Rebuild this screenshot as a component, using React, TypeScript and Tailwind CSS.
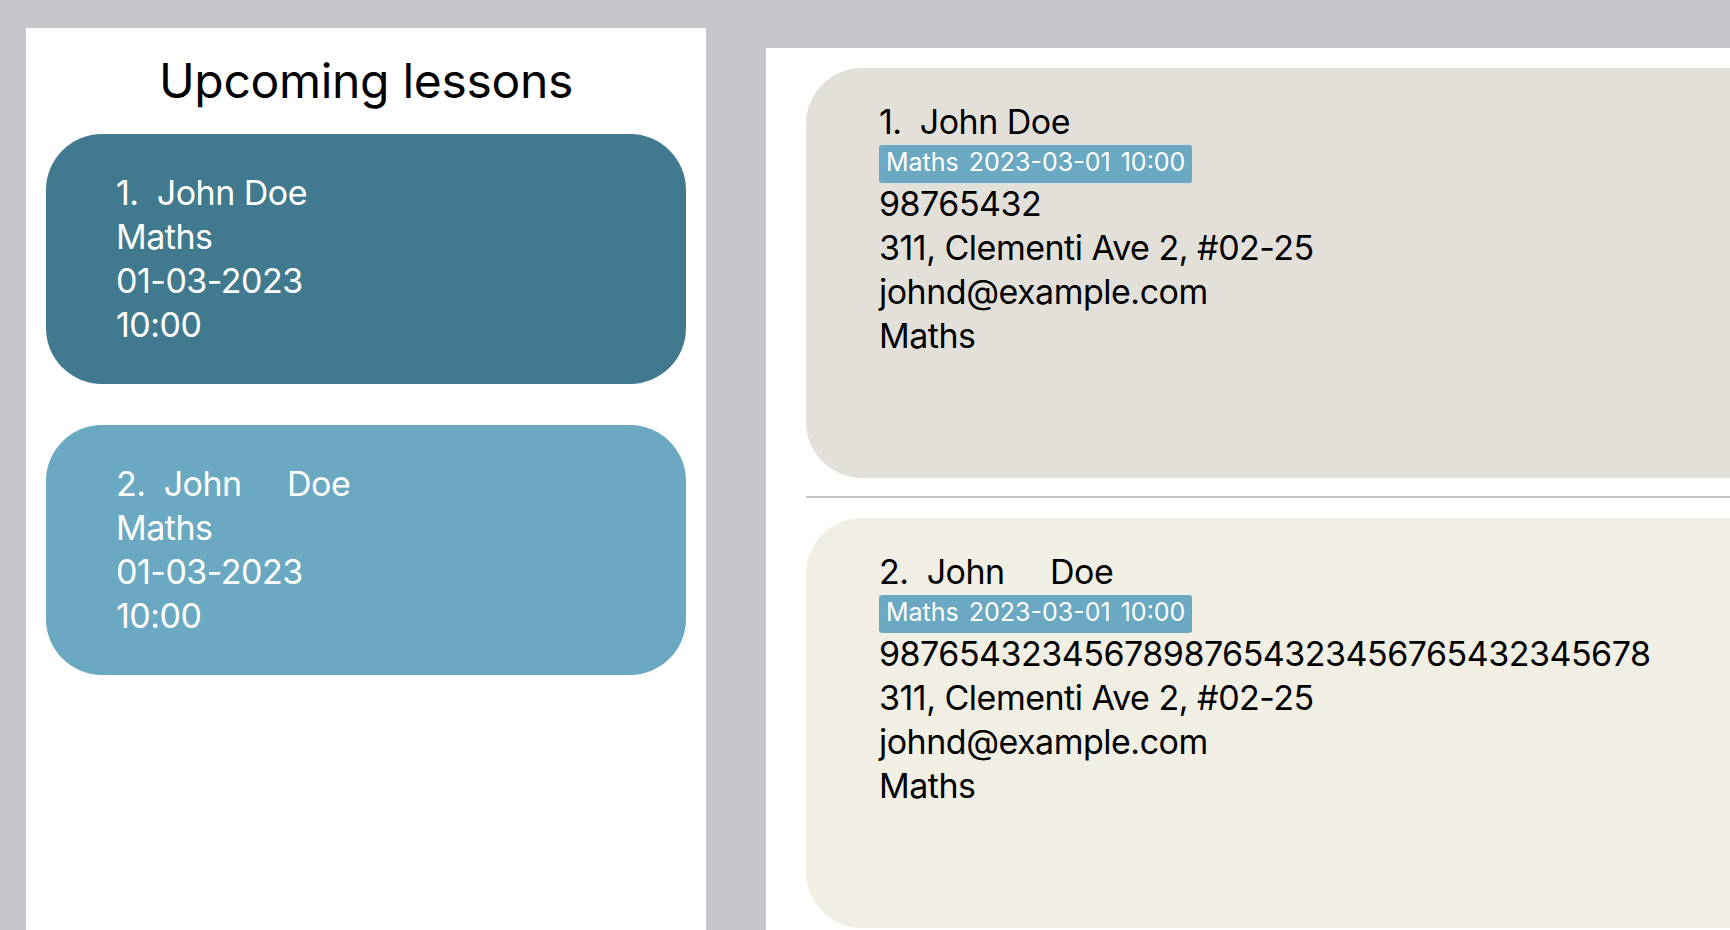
import React from "react";

type Lesson = {
  index: number;
  name: string;
  subject: string;
  date: string;
  time: string;
};

type Student = {
  index: number;
  name: string;
  tag: string;
  phone: string;
  address: string;
  email: string;
  subject: string;
};

const lessons: Lesson[] = [
  { index: 1, name: "John Doe", subject: "Maths", date: "01-03-2023", time: "10:00" },
  { index: 2, name: "John     Doe", subject: "Maths", date: "01-03-2023", time: "10:00" },
];

const students: Student[] = [
  {
    index: 1,
    name: "John Doe",
    tag: "Maths 2023-03-01 10:00",
    phone: "98765432",
    address: "311, Clementi Ave 2, #02-25",
    email: "johnd@example.com",
    subject: "Maths",
  },
  {
    index: 2,
    name: "John     Doe",
    tag: "Maths 2023-03-01 10:00",
    phone: "98765432345678987654323456765432345678",
    address: "311, Clementi Ave 2, #02-25",
    email: "johnd@example.com",
    subject: "Maths",
  },
];

const font = "font-['Inter','Open_Sans',sans-serif]";

function LessonCard({ lesson, selected }: { lesson: Lesson; selected: boolean }) {
  return (
    <div
      className={`mx-[20px] rounded-[56px] pl-[70px] pt-[37px] pb-[37px] text-white text-[34px] leading-[44px] tracking-[-0.5px] ${
        selected ? "bg-[#417a8e]" : "bg-[#6aa9c1]"
      }`}
    >
      <div className="whitespace-pre">
        {lesson.index}.  {lesson.name}
      </div>
      <div>{lesson.subject}</div>
      <div>{lesson.date}</div>
      <div>{lesson.time}</div>
    </div>
  );
}

function StudentCard({ s, bg }: { s: Student; bg: string }) {
  return (
    <div
      className={`w-[1100px] h-[410px] shrink-0 rounded-[56px] pl-[73px] pt-[32px] text-black text-[34px] leading-[44px] tracking-[-0.5px] ${bg}`}
    >
      <div className="whitespace-pre">
        {s.index}.  {s.name}
      </div>
      <div className="flex">
        <span className="mt-px h-[38px] rounded-[3px] bg-[#6aa9c1] px-[7px] pb-[3px] text-white text-[25px] leading-[35px] tracking-normal [word-spacing:3px]">
          {s.tag}
        </span>
      </div>
      <div className="-mt-[1px]">{s.phone}</div>
      <div>{s.address}</div>
      <div>{s.email}</div>
      <div>{s.subject}</div>
    </div>
  );
}

export default function App() {
  return (
    <div className={`flex h-[930px] w-full items-start overflow-hidden bg-[#c6c7cc] ${font}`}>
      {/* Upcoming lessons */}
      <div className="ml-[26px] mt-[28px] flex h-[902px] w-[680px] shrink-0 flex-col gap-[41px] bg-white">
        <div className="-mb-[17px] pt-[24px] text-center text-[48px] leading-[58px] tracking-[-0.3px] text-black">
          Upcoming lessons
        </div>
        {lessons.map((l, i) => (
          <LessonCard key={l.index} lesson={l} selected={i === 0} />
        ))}
      </div>

      {/* Student list */}
      <div className="ml-[60px] mt-[48px] flex h-[882px] min-w-0 flex-1 flex-col overflow-hidden bg-white pl-[40px] pt-[20px]">
        <StudentCard s={students[0]} bg="bg-[#e3e0da]" />
        <div className="mt-[18px] mb-[20px] h-[2px] w-full shrink-0 bg-[#c6c7cc]" />
        <StudentCard s={students[1]} bg="bg-[#f1eee3]" />
      </div>
    </div>
  );
}
